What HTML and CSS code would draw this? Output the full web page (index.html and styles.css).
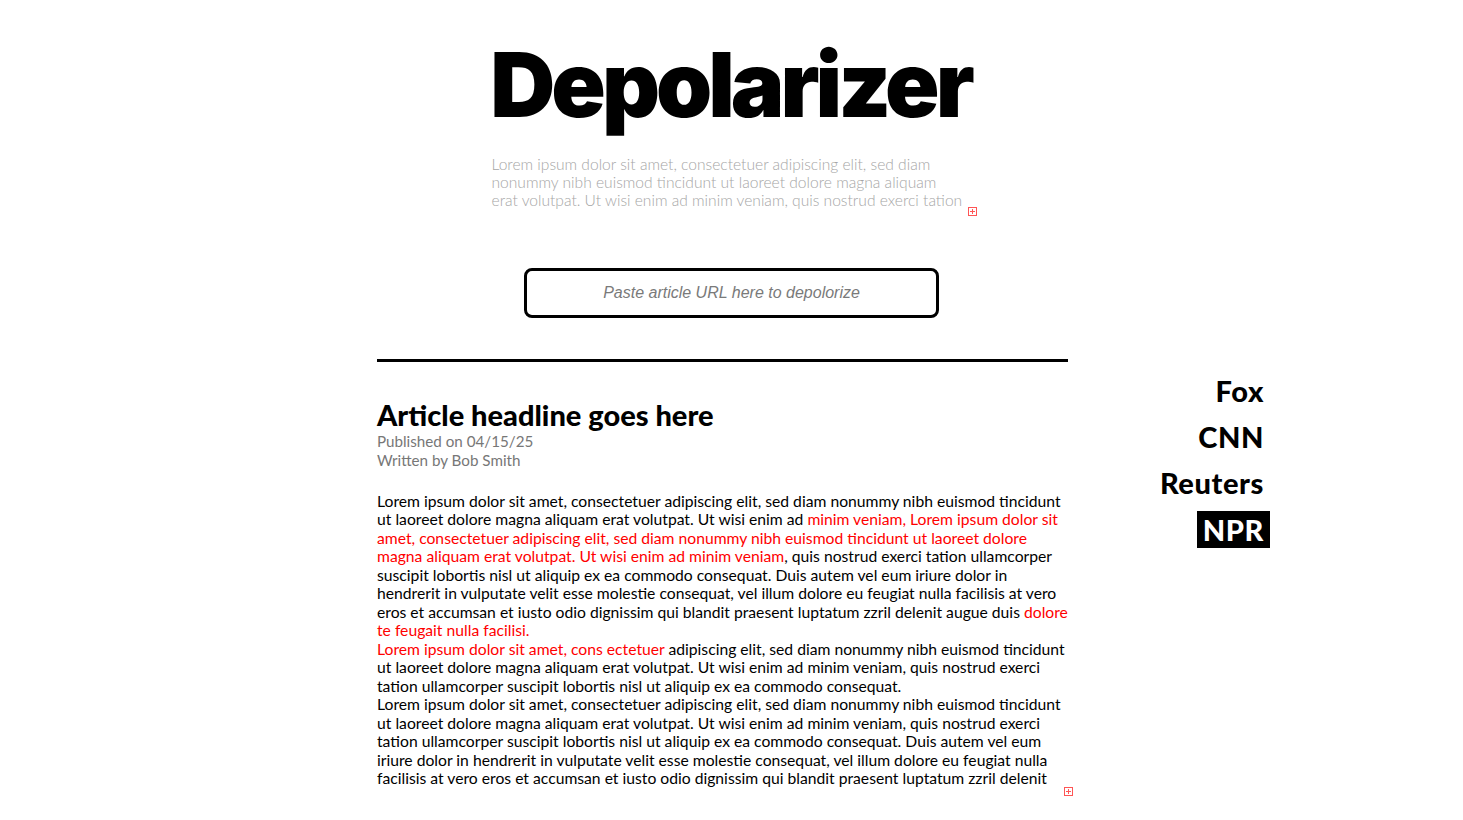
FILE: index.html
```html
<!DOCTYPE html>
<html lang="en">
<head>
<meta charset="utf-8">
<title>Depolarizer</title>
<link rel="stylesheet" href="styles.css">
</head>
<body>
<header class="hero">
  <h1 class="brand">Depolarizer</h1>
  <p class="tagline">Lorem ipsum dolor sit amet, consectetuer adipiscing elit, sed diam<br>nonummy nibh euismod tincidunt ut laoreet dolore magna aliquam<br>erat volutpat. Ut wisi enim ad minim veniam, quis nostrud exerci tation<span class="overflow"></span></p>
  <div class="url-box"><input class="url-input" type="text" placeholder="Paste article URL here to depolorize"></div>
</header>
<main class="content">
  <article class="article">
    <hr class="rule">
    <h2 class="headline">Article headline goes here</h2>
    <p class="meta">Published on 04/15/25<br>Written by Bob Smith</p>
    <div class="body">
      <p>Lorem ipsum dolor sit amet, consectetuer adipiscing elit, sed diam nonummy nibh euismod tincidunt<br>ut laoreet dolore magna aliquam erat volutpat. Ut wisi enim ad <span class="hl">minim veniam, Lorem ipsum dolor sit<br>amet, consectetuer adipiscing elit, sed diam nonummy nibh euismod tincidunt ut laoreet dolore<br>magna aliquam erat volutpat. Ut wisi enim ad minim veniam</span>, quis nostrud exerci tation ullamcorper<br>suscipit lobortis nisl ut aliquip ex ea commodo consequat. Duis autem vel eum iriure dolor in<br>hendrerit in vulputate velit esse molestie consequat, vel illum dolore eu feugiat nulla facilisis at vero<br>eros et accumsan et iusto odio dignissim qui blandit praesent luptatum zzril delenit augue duis <span class="hl">dolore<br>te feugait nulla facilisi.</span></p>
      <p><span class="hl">Lorem ipsum dolor sit amet, cons ectetuer</span> adipiscing elit, sed diam nonummy nibh euismod tincidunt<br>ut laoreet dolore magna aliquam erat volutpat. Ut wisi enim ad minim veniam, quis nostrud exerci<br>tation ullamcorper suscipit lobortis nisl ut aliquip ex ea commodo consequat.</p>
      <p>Lorem ipsum dolor sit amet, consectetuer adipiscing elit, sed diam nonummy nibh euismod tincidunt<br>ut laoreet dolore magna aliquam erat volutpat. Ut wisi enim ad minim veniam, quis nostrud exerci<br>tation ullamcorper suscipit lobortis nisl ut aliquip ex ea commodo consequat. Duis autem vel eum<br>iriure dolor in hendrerit in vulputate velit esse molestie consequat, vel illum dolore eu feugiat nulla<br>facilisis at vero eros et accumsan et iusto odio dignissim qui blandit praesent luptatum zzril delenit</p>
      <span class="overflow"></span>
    </div>
  </article>
  <nav class="sources">
    <a class="source">Fox</a>
    <a class="source">CNN</a>
    <a class="source">Reuters</a>
    <a class="source active">NPR</a>
  </nav>
</main>
</body>
</html>
```
FILE: styles.css
```css
* { box-sizing: border-box; }
html, body { margin: 0; padding: 0; background: #fff; }
body {
  font-family: "Lato", "Inter", sans-serif;
  color: #000;
  width: 1463px;
  height: 820px;
  overflow: hidden;
}
.hero {
  display: flex;
  flex-direction: column;
  align-items: center;
  padding-top: 30px;
}
.brand {
  margin: 0;
  font-family: "Inter", sans-serif;
  font-weight: 900;
  font-size: 90px;
  line-height: 110px;
  letter-spacing: -4px;
  padding-right: 2px;
}
.tagline {
  position: relative;
  width: 480px;
  margin: 15px 0 0 0;
  font-family: "Lato", sans-serif;
  font-weight: 300;
  font-size: 15.6px;
  line-height: 18px;
  color: #a6a6a6;
  white-space: nowrap;
}
.overflow {
  display: block;
  position: absolute;
  width: 9px;
  height: 9px;
  border: 1px solid #f55;
  background:
    linear-gradient(#f55, #f55) center / 5px 1px no-repeat,
    linear-gradient(#f55, #f55) center / 1px 5px no-repeat;
}
.tagline .overflow { left: 476px; bottom: -7px; }
.url-box {
  margin-top: 59px;
  width: 415px;
  height: 50px;
  border: 3px solid #000;
  border-radius: 8px;
  display: flex;
  align-items: center;
  justify-content: center;
}
.url-input {
  border: none;
  outline: none;
  width: 100%;
  text-align: center;
  background: transparent;
  font-family: "Liberation Sans", Arial, sans-serif;
  font-style: italic;
  font-size: 16px;
}
.url-input::placeholder { color: #7a7a7a; }
.content {
  display: flex;
  padding-left: 377px;
  margin-top: 41px;
}
.article {
  width: 691px;
}
.rule {
  margin: 0;
  border: none;
  height: 3px;
  background: #000;
}
.headline {
  margin: 36px 0 0 0;
  font-family: "Lato", sans-serif;
  font-weight: 900;
  font-size: 29px;
  line-height: 34px;
}
.meta {
  margin: 0;
  font-weight: 400;
  font-size: 15.2px;
  line-height: 19px;
  color: #777;
}
.body {
  position: relative;
  margin-top: 22px;
  font-size: 15.7px;
  line-height: 18.47px;
  white-space: nowrap;
}
.body p { margin: 0; }
.body .overflow { right: -5px; bottom: -8px; }
.hl { color: #ff0000; }
.sources {
  width: 202px;
  display: flex;
  flex-direction: column;
  align-items: flex-end;
  padding-top: 13px;
  gap: 9px;
}
.source {
  font-family: "Lato", sans-serif;
  font-weight: 900;
  font-size: 29px;
  letter-spacing: 0.6px;
  line-height: 37px;
  padding: 0 6px;
}
.source.active {
  margin-top: 1px;
  background: #000;
  color: #fff;
}
```
